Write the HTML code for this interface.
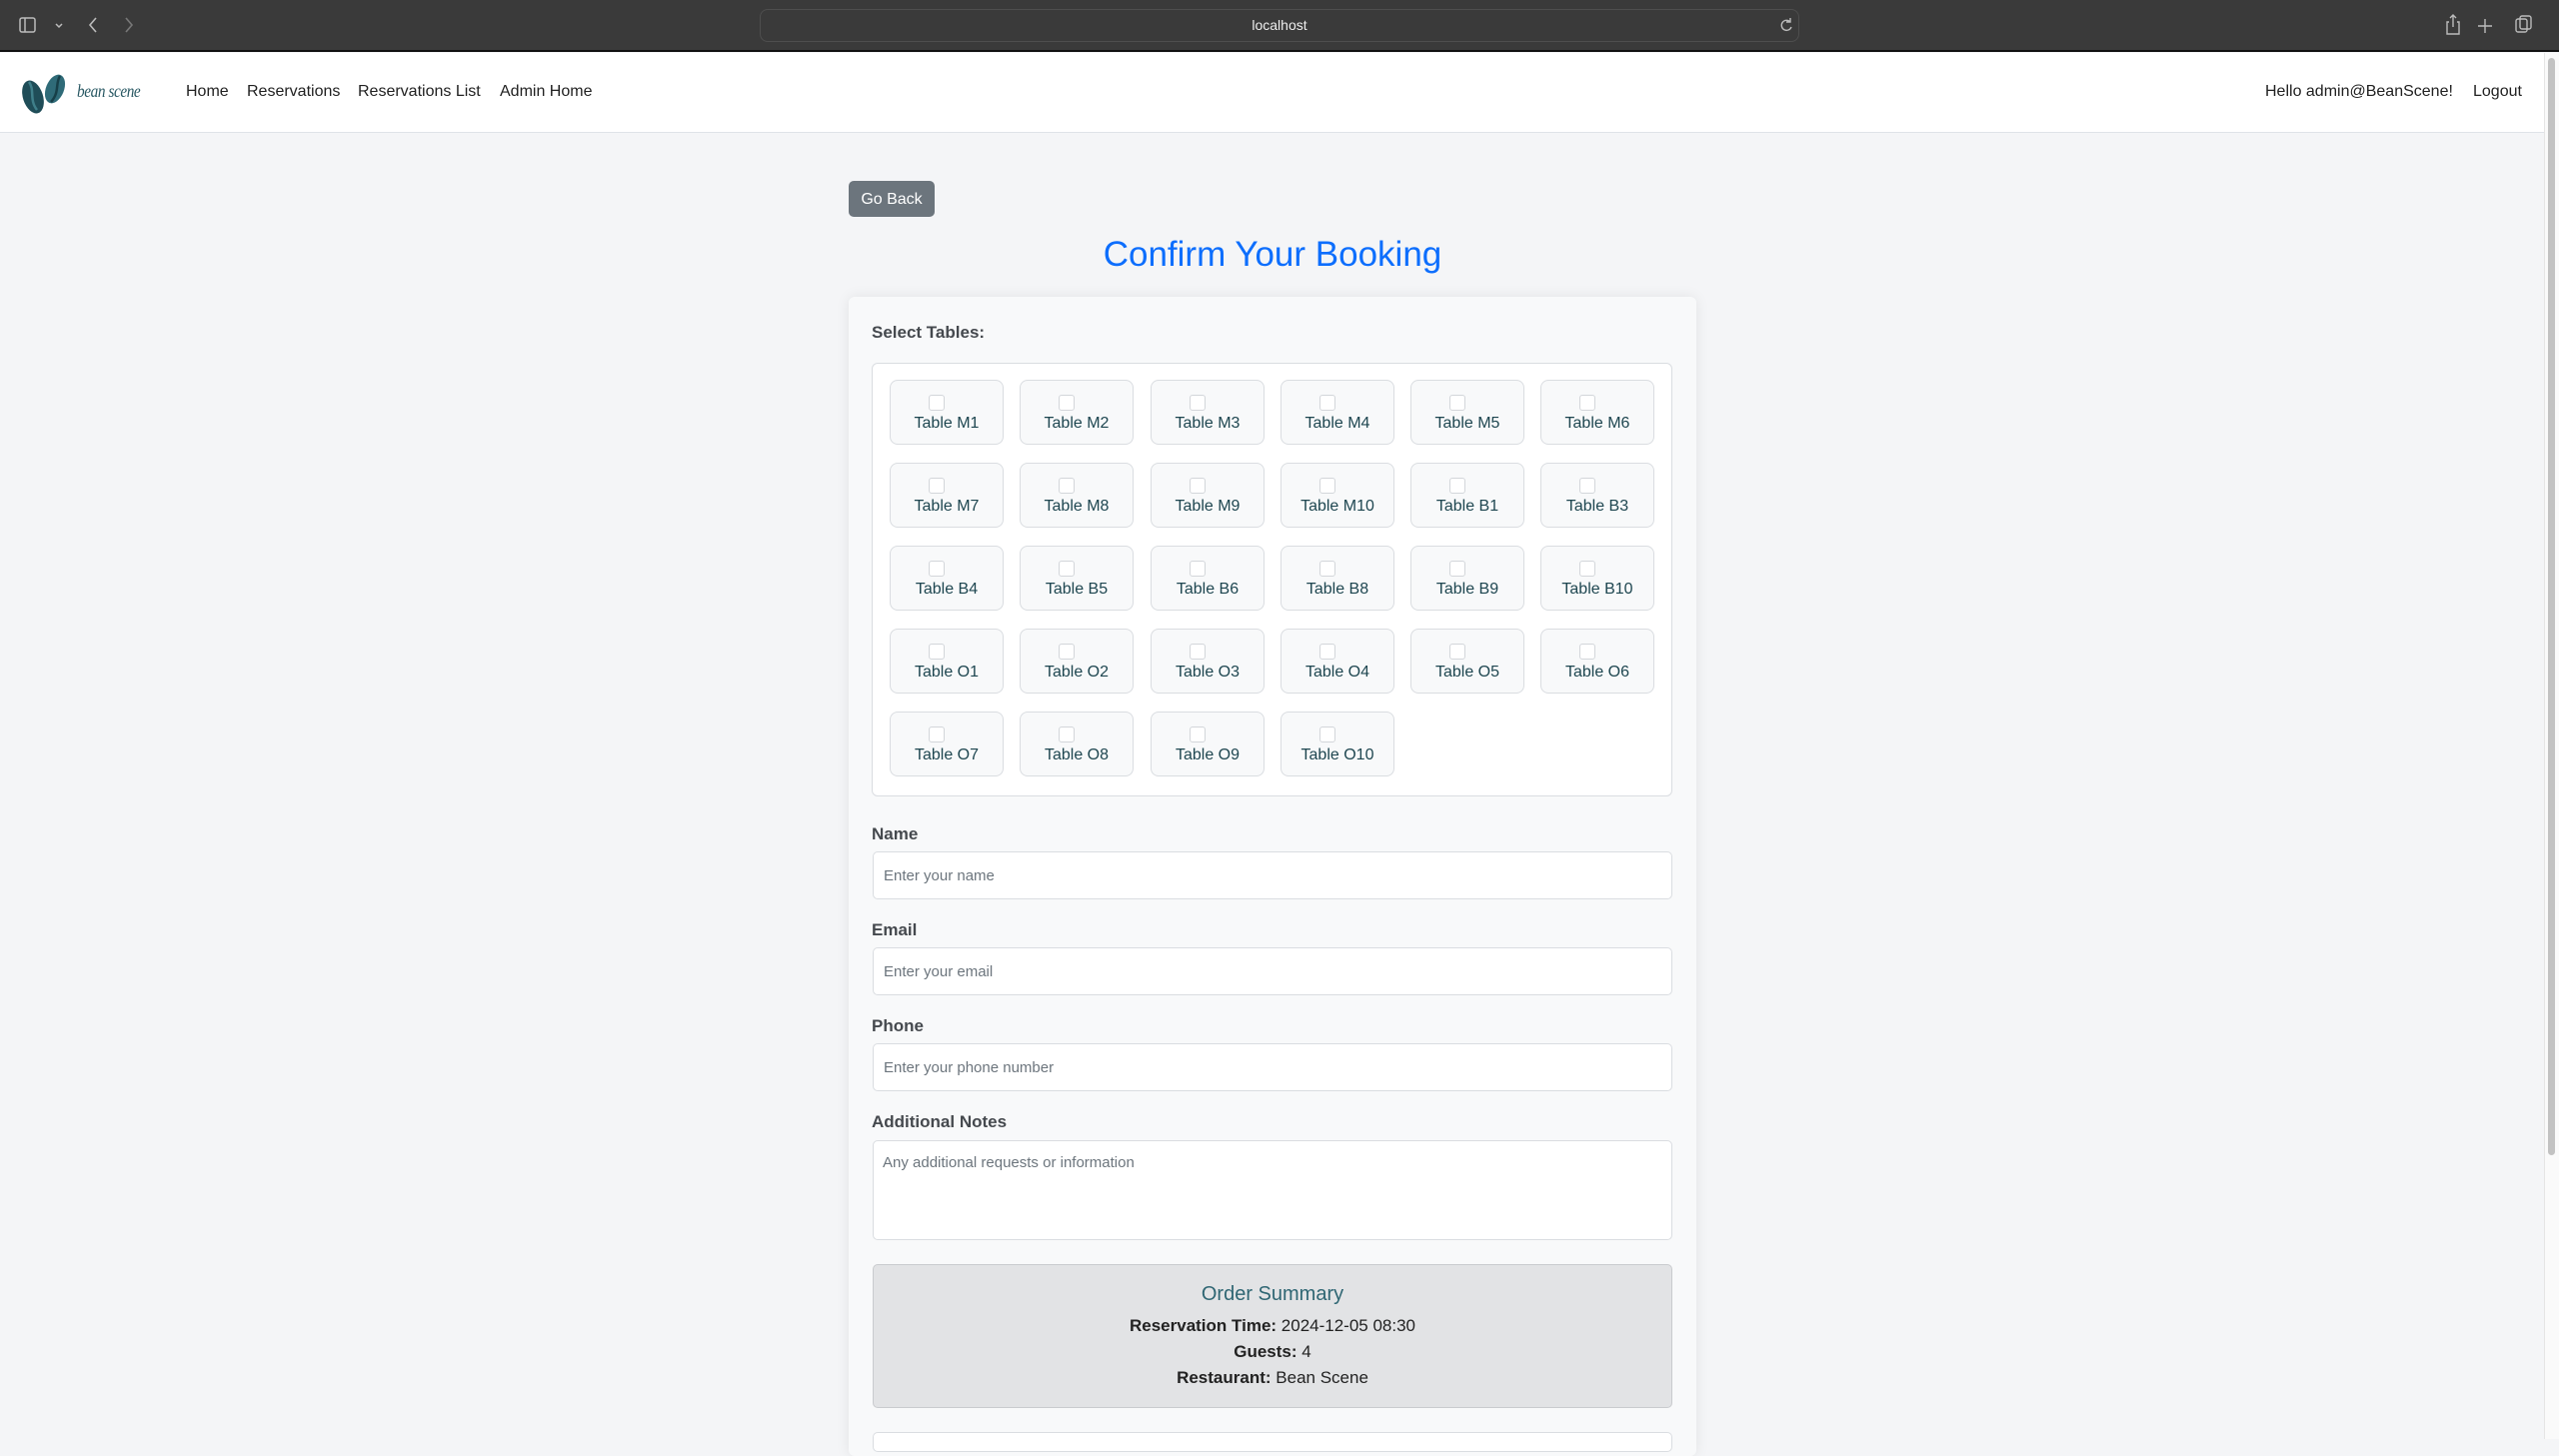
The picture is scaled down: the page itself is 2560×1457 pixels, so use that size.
<!DOCTYPE html>
<html><head><meta charset="utf-8"><style>
*{box-sizing:border-box;margin:0;padding:0}
body{width:2560px;height:1440px;overflow:hidden;background:#f4f5f7;font-family:"Liberation Sans",sans-serif;position:relative}
.a{position:absolute}
.top{left:0;top:0;width:2560px;height:52px;background:#3a3a3a;border-bottom:2px solid #111}
.addr{left:760px;top:9px;width:1040px;height:33px;border:1px solid #4e4e4e;border-radius:8px;color:#eee;font-size:14px;text-align:center;line-height:31px}
.nav{left:0;top:53px;width:2545px;height:80px;background:#fff;border-bottom:1px solid #dfe3e8}
.nl{top:83px;font-size:16px;color:#222}
.card{left:849px;top:297px;width:848px;height:1160px;background:#f8f9fa;border-radius:6px;box-shadow:0 0 14px rgba(0,0,0,.08)}
.tile{width:114px;height:65px;background:#f8f9fa;border:1px solid #dadde1;border-radius:8px;text-align:center;color:#1e4650;font-size:16px}
.tile i{position:absolute;left:38px;top:14px;width:16px;height:16px;border:1px solid #d3d6da;border-radius:3px;background:#fff}
.tile span{position:absolute;left:0;right:0;top:34px}
.lbl{left:872px;font-size:17px;font-weight:bold;color:#45494e}
.inp{left:873px;width:800px;height:48px;background:#fff;border:1px solid #dadde1;border-radius:5px;font-size:15px;color:#6c757d;padding:15px 10px}
</style></head><body>
<div class="a top"></div>
<svg class="a" style="left:18px;top:15px" width="50" height="22" viewBox="0 0 50 22" fill="none" stroke="#bbb" stroke-width="1.5"><rect x="2" y="3" width="15" height="14" rx="2"/><line x1="7" y1="3" x2="7" y2="17"/><path d="M38 9l3 3 3-3"/></svg>
<svg class="a" style="left:86px;top:14px" width="14" height="22" fill="none" stroke="#bbb" stroke-width="1.6"><path d="M10 4l-6 7 6 7"/></svg>
<svg class="a" style="left:122px;top:14px" width="14" height="22" fill="none" stroke="#777" stroke-width="1.6"><path d="M4 4l6 7-6 7"/></svg>
<div class="a addr">localhost</div>
<svg class="a" style="left:1780px;top:17px" width="14" height="16" fill="none" stroke="#bbb" stroke-width="1.4"><path d="M11 5a5 5 0 1 0 1 5M11 1v4h-4"/></svg>
<svg class="a" style="left:2446px;top:12px" width="110" height="26" fill="none" stroke="#bbb" stroke-width="1.4"><path d="M4 10h-2v12h12v-12h-2M8 3v12M5 6l3-3 3 3"/><path d="M40 7v14M33 14h14"/><rect x="71" y="7" width="11" height="13" rx="2"/><rect x="75" y="4" width="11" height="13" rx="2"/></svg>
<div class="a nav"></div>
<svg class="a" style="left:16px;top:70px" width="56" height="46" viewBox="0 0 56 46"><ellipse cx="17" cy="27" rx="10" ry="17" transform="rotate(-18 17 27)" fill="#1f4d58"/><path d="M13 12c6 8 0 18 8 28" stroke="#3f7f8a" stroke-width="2.5" fill="none"/><ellipse cx="39" cy="19" rx="9" ry="15" transform="rotate(22 39 19)" fill="#2f6b78"/><path d="M44 6c-5 8 0 16-9 26" stroke="#173f48" stroke-width="2.5" fill="none"/></svg>
<div class="a" style="left:77px;top:81px;font-family:'Liberation Serif',serif;font-style:italic;font-size:18px;letter-spacing:-0.5px;transform:scaleX(0.85);transform-origin:left;color:#2a5964">bean scene</div>
<div class="a nl" style="left:186px">Home</div>
<div class="a nl" style="left:247px">Reservations</div>
<div class="a nl" style="left:358px">Reservations List</div>
<div class="a nl" style="left:500px">Admin Home</div>
<div class="a nl" style="left:2266px">Hello admin@BeanScene!</div>
<div class="a nl" style="left:2474px">Logout</div>
<div class="a" style="left:2545px;top:53px;width:15px;height:1387px;background:#fafafa;border-left:1px solid #e5e5e5"></div>
<div class="a" style="left:2549px;top:58px;width:7px;height:1098px;background:#c2c2c2;border-radius:4px"></div>
<div class="a" style="left:849px;top:181px;width:86px;height:36px;background:#6c757d;border-radius:5px;color:#fff;font-size:16px;text-align:center;line-height:38px">Go Back</div>
<div class="a" style="left:849px;top:235px;width:848px;text-align:center;font-size:35px;color:#0d6efd">Confirm Your Booking</div>
<div class="a card"></div>
<div class="a lbl" style="top:323px">Select Tables:</div>
<div class="a" style="left:872px;top:363px;width:801px;height:434px;background:#fff;border:1px solid #dadde1;border-radius:6px"></div>
<div class="a lbl" style="top:825px">Name</div>
<div class="a inp" style="top:852px">Enter your name</div>
<div class="a lbl" style="top:921px">Email</div>
<div class="a inp" style="top:948px">Enter your email</div>
<div class="a lbl" style="top:1017px">Phone</div>
<div class="a inp" style="top:1044px">Enter your phone number</div>
<div class="a lbl" style="top:1113px">Additional Notes</div>
<div class="a inp" style="top:1141px;height:100px;padding:13px 9px">Any additional requests or information</div>
<div class="a" style="left:873px;top:1265px;width:800px;height:144px;background:#e2e3e5;border:1px solid #c9cbce;border-radius:5px;text-align:center;color:#222;font-size:17px;line-height:26px;padding-top:16px">
<div style="color:#2f6673;font-size:20px;margin-bottom:6px">Order Summary</div>
<div><b>Reservation Time:</b> 2024-12-05 08:30</div>
<div><b>Guests:</b> 4</div>
<div><b>Restaurant:</b> Bean Scene</div>
</div>
<div class="a" style="left:873px;top:1433px;width:800px;height:20px;background:#fff;border:1px solid #dadde1;border-radius:5px"></div>
<div class="a tile" style="left:890px;top:380px"><i></i><span>Table M1</span></div>
<div class="a tile" style="left:1020px;top:380px"><i></i><span>Table M2</span></div>
<div class="a tile" style="left:1151px;top:380px"><i></i><span>Table M3</span></div>
<div class="a tile" style="left:1281px;top:380px"><i></i><span>Table M4</span></div>
<div class="a tile" style="left:1411px;top:380px"><i></i><span>Table M5</span></div>
<div class="a tile" style="left:1541px;top:380px"><i></i><span>Table M6</span></div>
<div class="a tile" style="left:890px;top:463px"><i></i><span>Table M7</span></div>
<div class="a tile" style="left:1020px;top:463px"><i></i><span>Table M8</span></div>
<div class="a tile" style="left:1151px;top:463px"><i></i><span>Table M9</span></div>
<div class="a tile" style="left:1281px;top:463px"><i></i><span>Table M10</span></div>
<div class="a tile" style="left:1411px;top:463px"><i></i><span>Table B1</span></div>
<div class="a tile" style="left:1541px;top:463px"><i></i><span>Table B3</span></div>
<div class="a tile" style="left:890px;top:546px"><i></i><span>Table B4</span></div>
<div class="a tile" style="left:1020px;top:546px"><i></i><span>Table B5</span></div>
<div class="a tile" style="left:1151px;top:546px"><i></i><span>Table B6</span></div>
<div class="a tile" style="left:1281px;top:546px"><i></i><span>Table B8</span></div>
<div class="a tile" style="left:1411px;top:546px"><i></i><span>Table B9</span></div>
<div class="a tile" style="left:1541px;top:546px"><i></i><span>Table B10</span></div>
<div class="a tile" style="left:890px;top:629px"><i></i><span>Table O1</span></div>
<div class="a tile" style="left:1020px;top:629px"><i></i><span>Table O2</span></div>
<div class="a tile" style="left:1151px;top:629px"><i></i><span>Table O3</span></div>
<div class="a tile" style="left:1281px;top:629px"><i></i><span>Table O4</span></div>
<div class="a tile" style="left:1411px;top:629px"><i></i><span>Table O5</span></div>
<div class="a tile" style="left:1541px;top:629px"><i></i><span>Table O6</span></div>
<div class="a tile" style="left:890px;top:712px"><i></i><span>Table O7</span></div>
<div class="a tile" style="left:1020px;top:712px"><i></i><span>Table O8</span></div>
<div class="a tile" style="left:1151px;top:712px"><i></i><span>Table O9</span></div>
<div class="a tile" style="left:1281px;top:712px"><i></i><span>Table O10</span></div>
</body></html>
